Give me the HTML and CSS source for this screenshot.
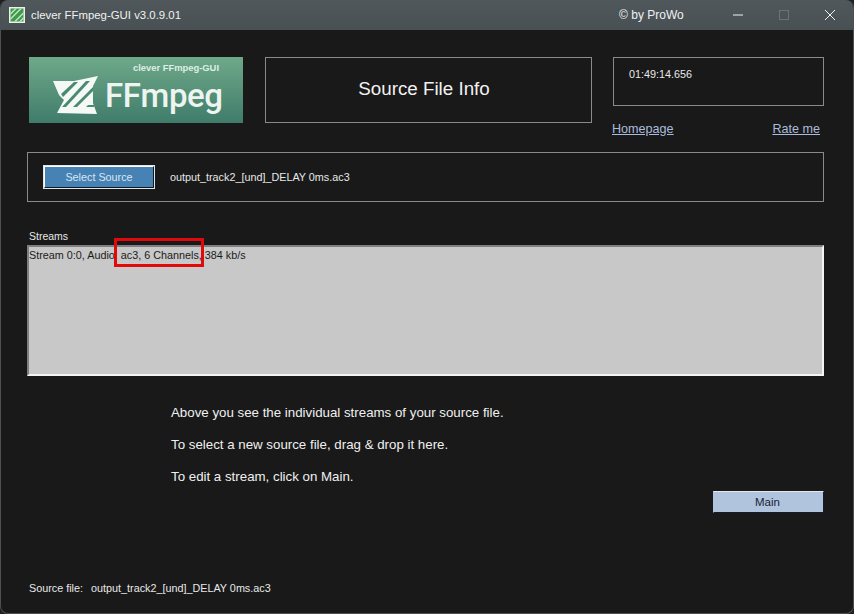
FILE: index.html
```html
<!DOCTYPE html>
<html lang="en">
<head>
<meta charset="utf-8">
<title>clever FFmpeg-GUI</title>
<link rel="stylesheet" href="styles.css">
</head>
<body>
<div class="window">
  <header class="titlebar">
    <svg class="app-icon" viewBox="0 0 16 16" width="16" height="16">
      <rect width="16" height="16" fill="#e9f1e9"/>
      <rect x="1.500" y="1.500" width="13" height="13" fill="#3f9a4c"/>
      <path d="M1.500 6 6 1.500h2l-6.500 6.500zM1.500 11 11 1.500h2L1.500 13zM5 14.500 14.500 5v2L7 14.500zM10 14.500l4.500-4.500v2L12 14.500z" fill="#c5e4c2"/>
    </svg>
    <span class="app-title">clever FFmpeg-GUI v3.0.9.01</span>
    <span class="app-credit">© by ProWo</span>
    <div class="win-controls">
      <svg viewBox="0 0 10 10" width="10" height="10"><path d="M0 5h10" stroke="#f2f2f2" fill="none"/></svg>
      <svg viewBox="0 0 10 10" width="10" height="10"><rect x=".5" y=".5" width="9" height="9" stroke="#6a7276" fill="none"/></svg>
      <svg viewBox="0 0 10 10" width="10" height="10"><path d="M0 0l10 10M10 0 0 10" stroke="#f2f2f2" fill="none"/></svg>
    </div>
  </header>
  <main class="content">
    <section class="top-row">
      <div class="logo">
        <span class="logo-sub">clever FFmpeg-GUI</span>
        <div class="logo-main">
          <svg class="logo-mark" viewBox="0 0 54 46" width="54" height="46">
            <path d="M3 8H24L48 3 43 13V30L47 41 7 40 14 27 9 22z" fill="#f4f8f6"/>
            <path d="M24 9H28L13 24 11 21zM36 8H40L16 34H12zM43 14V18L27 34H23zM38 32H44V34H36z" fill="#4a8a72"/>
          </svg>
          <span class="logo-text">FFmpeg</span>
        </div>
      </div>
      <div class="info-box">Source File Info</div>
      <div class="side">
        <div class="time-box">01:49:14.656</div>
        <div class="links"><a href="#">Homepage</a><a href="#">Rate me</a></div>
      </div>
    </section>
    <section class="source-row">
      <button class="btn-source">Select Source</button>
      <span class="file-name">output_track2_[und]_DELAY 0ms.ac3</span>
    </section>
    <section class="streams">
      <div class="streams-label">Streams</div>
      <div class="stream-list">
        <div class="stream-item">Stream 0:0, Audio: ac3, 6 Channels, 384 kb/s</div>
        <div class="highlight"></div>
      </div>
    </section>
    <section class="help">
      <p>Above you see the individual streams of your source file.</p>
      <p>To select a new source file, drag &amp; drop it here.</p>
      <p>To edit a stream, click on Main.</p>
    </section>
    <div class="actions"><button class="btn-main">Main</button></div>
    <footer class="footer"><span>Source file:</span><span>output_track2_[und]_DELAY 0ms.ac3</span></footer>
  </main>
</div>
</body>
</html>
```
FILE: styles.css
```css
* { box-sizing: border-box; }
html, body { margin: 0; height: 100%; background: #202020; }
body { font-family: "Liberation Sans", Arial, sans-serif; overflow: hidden; }
.window {
  width: 854px; height: 614px; display: flex; flex-direction: column;
  background: #191919; border-radius: 8px; overflow: hidden;
  border: 1px solid #4a5155; border-top: 0;
}
.titlebar {
  height: 30px; flex: none; display: flex; align-items: center;
  background: linear-gradient(#50585c, #485054); color: #f0f2f2; font-size: 11.400px; padding-left: 8px;
}
.app-icon { flex: none; }
.app-title { margin-left: 6px; }
.app-credit { margin-left: 438px; font-size: 12px; }
.win-controls { margin-left: auto; display: flex; gap: 36px; padding-right: 18px; align-items: center; }
.content { flex: 1; display: flex; flex-direction: column; padding: 27px 29px 0 26px; color: #e8e8e8; font-size: 10.800px; }
.top-row { display: flex; align-items: flex-start; height: 95px; }
.logo {
  width: 214px; height: 66px; margin-left: 2px; flex: none;
  background: linear-gradient(#6fa98a, #3f7c6a); color: #eef5f1;
  display: flex; flex-direction: column;
}
.logo-sub { font-weight: bold; font-size: 9.400px; line-height: 10px; align-self: flex-end; margin: 6px 24px 0 0; color: #dfeee6; }
.logo-main { display: flex; align-items: center; margin: 0 0 0 21px; }
.logo-mark { flex: none; }
.logo-text { font-family: Roboto, sans-serif; font-weight: 500; font-size: 33px; line-height: 40px; margin: 0 0 0 1px; letter-spacing: -.4px; }
.info-box {
  width: 327px; height: 66px; margin-left: 22px; flex: none; border: 1px solid #8a8a8a; padding: 0 9px 2px 0;
  display: flex; align-items: center; justify-content: center; font-size: 18.800px; color: #f2f2f2;
}
.side { width: 211px; margin-left: 21px; flex: none; display: flex; flex-direction: column; }
.time-box { height: 49px; border: 1px solid #8a8a8a; padding: 10px 15px; }
.links { display: flex; justify-content: space-between; margin-top: 16px; padding-right: 4px; font-size: 12.600px; margin-left: -1px; }
.links a { color: #a9bcdc; }
.source-row {
  height: 50px; display: flex; align-items: center; border: 1px solid #8a8a8a; flex: none; padding-left: 16px;
}
.btn-source {
  width: 110px; height: 22px; background: #4682b4; color: #d8e6f2; font: inherit; padding: 0;
  border: 1px solid; border-color: #fff #0d1a26 #0d1a26 #fff; outline: 1px solid #e4e4e4;
}
.file-name { margin-left: 16px; }
.streams { margin-top: 27px; flex: none; }
.streams-label { height: 16px; line-height: 14px; padding-left: 2px; font-size: 10.500px; }
.stream-list {
  position: relative; height: 131px; background: #c8c8c8; color: #1b1b1b; padding: 1px 0;
  border: 2px solid; border-color: #7f7f7f #f4f4f4 #f4f4f4 #7f7f7f;
}
.stream-item { line-height: 14px; }
.highlight { position: absolute; left: 85px; top: -9px; width: 90px; height: 29px; border: 3px solid #e00a0a; }
.help { margin: 29px 0 0 144px; font-size: 13.300px; color: #f0f0f0; }
.help p { margin: 0 0 17px; line-height: 15px; }
.actions { display: flex; justify-content: flex-end; margin-top: -10px; }
.btn-main {
  width: 111px; height: 22px; background: #b0c4de; color: #1c2233; font: inherit; font-size: 11.500px; padding: 0 2px 0 0;
  border: 1px solid; border-color: #e2e8f0 #141b2c #141b2c #b0c4de;
}
.footer { display: flex; gap: 8px; margin-top: 68px; padding-left: 2px; line-height: 14px; }
```
